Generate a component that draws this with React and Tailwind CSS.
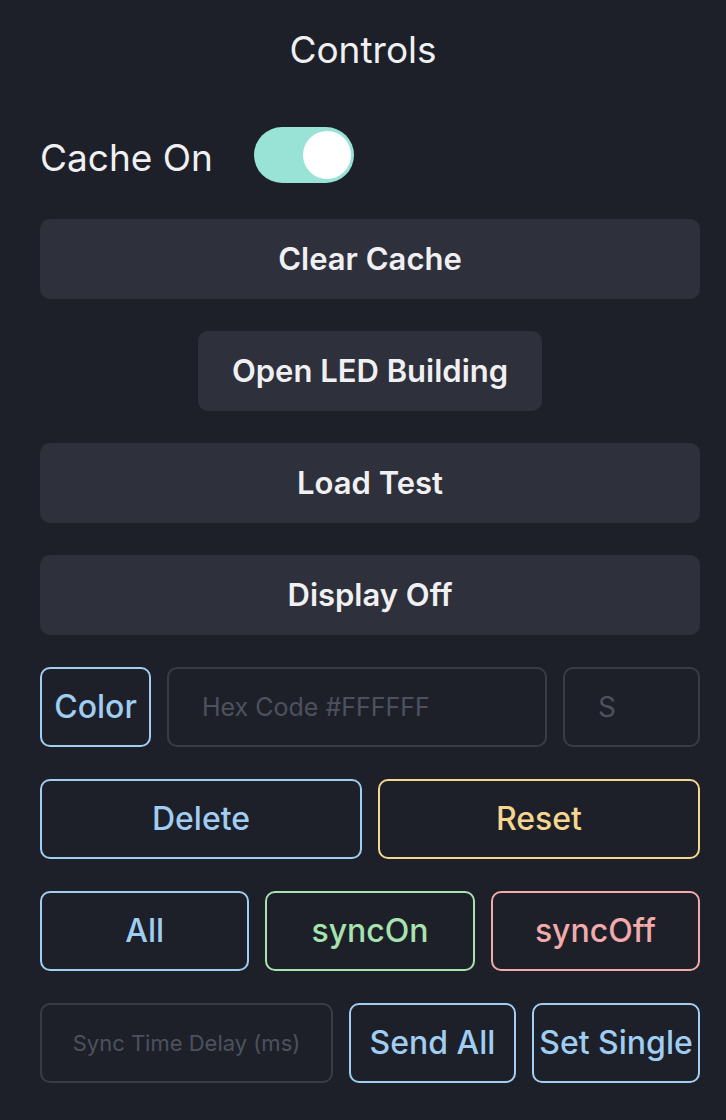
import { useState } from 'react';

export default function App() {
  const [cacheOn, setCacheOn] = useState(true);
  const [hex, setHex] = useState('');
  const [single, setSingle] = useState('');
  const [delay, setDelay] = useState('');

  return (
    <div className="min-h-screen bg-[#1d2029] text-[#f0f0f2] font-['Inter',sans-serif]">
      <h1 className="pt-[28px] text-center text-[37px] leading-[44px] font-normal">Controls</h1>

      <div className="pl-10 pr-[26px] pb-10">
        {/* cache toggle */}
        <div className="mt-[55px] flex items-start gap-[41px]">
          <span className="mt-[3px] text-[37px] leading-[56px]">Cache On</span>
          <button
            onClick={() => setCacheOn(!cacheOn)}
            className={`relative h-[56px] w-[100px] rounded-full transition ${cacheOn ? 'bg-[#98e3d6]' : 'bg-[#3a3e4a]'}`}
          >
            <span
              className={`absolute top-[4px] h-[48px] w-[48px] rounded-full bg-white transition-all ${cacheOn ? 'right-[3px]' : 'left-[3px]'}`}
            />
          </button>
        </div>

        <div className="mt-[33px] flex flex-col items-center gap-8">
          <button className="h-20 w-full rounded-[10px] bg-[#2e313c] text-[31px] font-semibold">Clear Cache</button>
          <button className="h-20 rounded-[10px] bg-[#2e313c] px-[34px] text-[31px] font-semibold">Open LED Building</button>
          <button className="h-20 w-full rounded-[10px] bg-[#2e313c] text-[31px] font-semibold">Load Test</button>
          <button className="h-20 w-full rounded-[10px] bg-[#2e313c] text-[31px] font-semibold">Display Off</button>

          {/* color row */}
          <div className="flex w-full gap-4">
            <button className="h-20 w-[111px] shrink-0 rounded-[10px] border-2 border-[#a0cdf2] text-[32px] font-medium text-[#a0cdf2]">Color</button>
            <input
              value={hex}
              onChange={(e) => setHex(e.target.value)}
              placeholder="Hex Code #FFFFFF"
              className="h-20 min-w-0 flex-1 rounded-[10px] border-2 border-[#383c47] bg-transparent px-[33px] text-[25px] text-[#f0f0f2] outline-none placeholder:text-[#4d515e]"
            />
            <input
              value={single}
              onChange={(e) => setSingle(e.target.value)}
              placeholder="S"
              className="h-20 w-[137px] shrink-0 rounded-[10px] border-2 border-[#383c47] bg-transparent px-[33px] text-[28px] text-[#f0f0f2] outline-none placeholder:text-[#4d515e]"
            />
          </div>

          <div className="flex w-full gap-4">
            <button className="h-20 flex-1 rounded-[10px] border-2 border-[#a0cdf2] text-[32px] font-medium text-[#a0cdf2]">Delete</button>
            <button className="h-20 flex-1 rounded-[10px] border-2 border-[#f6d58f] text-[32px] font-medium text-[#f6d58f]">Reset</button>
          </div>

          <div className="flex w-full gap-4">
            <button className="h-20 flex-1 rounded-[10px] border-2 border-[#a0cdf2] text-[32px] font-medium text-[#a0cdf2]">All</button>
            <button className="h-20 flex-1 rounded-[10px] border-2 border-[#a8e2ae] text-[32px] font-medium text-[#a8e2ae]">syncOn</button>
            <button className="h-20 flex-1 rounded-[10px] border-2 border-[#f2aaaa] text-[32px] font-medium text-[#f2aaaa]">syncOff</button>
          </div>

          <div className="flex w-full gap-4">
            <input
              value={delay}
              onChange={(e) => setDelay(e.target.value)}
              placeholder="Sync Time Delay (ms)"
              className="h-20 min-w-0 flex-1 rounded-[10px] border-2 border-[#383c47] bg-transparent text-center text-[22px] text-[#f0f0f2] outline-none placeholder:text-[#4d515e]"
            />
            <button className="h-20 w-[167px] shrink-0 rounded-[10px] border-2 border-[#a0cdf2] text-[32px] font-medium text-[#a0cdf2]">Send All</button>
            <button className="h-20 w-[168px] shrink-0 rounded-[10px] border-2 border-[#a0cdf2] text-[32px] font-medium text-[#a0cdf2]">Set Single</button>
          </div>
        </div>
      </div>
    </div>
  );
}
